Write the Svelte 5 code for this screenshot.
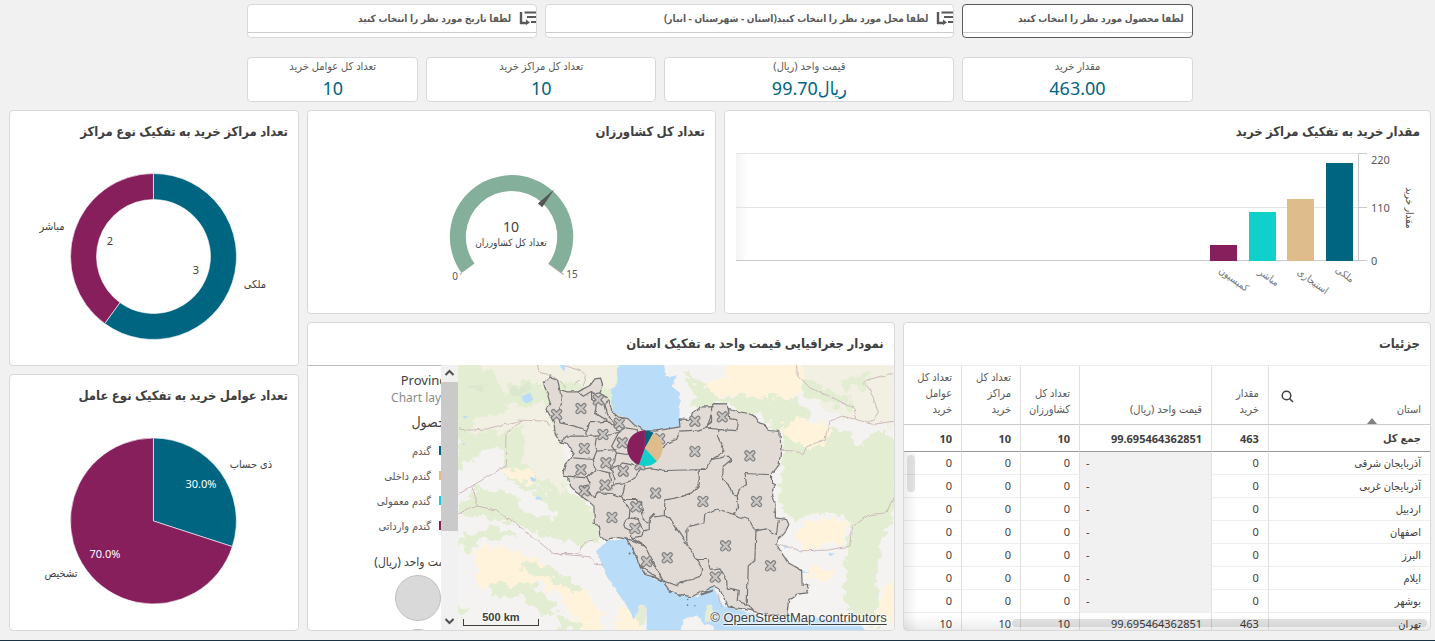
<script>
  const filters = [
    { label: 'لطفا تاریخ مورد نظر را انتخاب کنید', icon: true, active: false, span: 5 },
    { label: 'لطفا محل مورد نظر را انتخاب کنید(استان - شهرستان - انبار)', icon: true, active: false, span: 7 },
    { label: 'لطفا محصول مورد نظر را انتخاب کنید', icon: false, active: true, span: 4 }
  ];
  const kpis = [
    { label: 'تعداد کل عوامل خرید', value: '10', span: 3 },
    { label: 'تعداد کل مراکز خرید', value: '10', span: 4 },
    { label: 'قیمت واحد (ریال)', value: '99.70ریال', span: 5 },
    { label: 'مقدار خرید', value: '463.00', span: 4 }
  ];
  const bars = [
    { name: 'ملکی', x: 601, y: 10, color: '#006580', lx: 618, ly: 124 },
    { name: 'استیجاری', x: 562, y: 46, color: '#dfbc8c', lx: 586, ly: 131 },
    { name: 'مباشر', x: 524, y: 59, color: '#11cfca', lx: 542, ly: 127 },
    { name: 'کمیسیون', x: 485, y: 92, color: '#871f5c', lx: 507, ly: 129 }
  ];
  const legend = [
    { name: 'گندم', color: '#006580' },
    { name: 'گندم داخلی', color: '#dfbc8c' },
    { name: 'گندم معمولی', color: '#11cfca' },
    { name: 'گندم وارداتی', color: '#871f5c' }
  ];
  const rows = [
    ['آذربایجان شرقی', '0', '-', '0', '0', '0'],
    ['آذربایجان غربی', '0', '-', '0', '0', '0'],
    ['اردبیل', '0', '-', '0', '0', '0'],
    ['اصفهان', '0', '-', '0', '0', '0'],
    ['البرز', '0', '-', '0', '0', '0'],
    ['ایلام', '0', '-', '0', '0', '0'],
    ['بوشهر', '0', '-', '0', '0', '0'],
    ['تهران', '463', '99.695464362851', '10', '10', '10']
  ];
  const marks = [
    [320, 165], [393, 147], [445, 121], [508, 191], [459, 225], [517, 250], [403, 267], [393, 331], [468, 310],
    [520, 335], [465, 377], [403, 394], [486, 474], [558, 442], [555, 507], [617, 401], [652, 595], [590, 606],
    [629, 238], [570, 316], [735, 185], [817, 172], [735, 276], [900, 289], [759, 426], [920, 426], [827, 559],
    [962, 619], [796, 653]
  ];
</script>

<div class="page">
  <div class="top filters">
    {#each filters as f}
      <button type="button" class="card filter" class:active={f.active} style="grid-column-end: span {f.span}">
        <span class="filter-head">
          {#if f.icon}
            <svg class="drill" viewBox="0 0 17 14" aria-hidden="true">
              <path d="M2 1V12H8" fill="none" stroke="#595959" stroke-width="2.4" />
              <path d="M7 8.5V14L11 11.5Z" fill="#595959" />
              <path d="M5.500 1.500H17M8 6H17M12 11H17" stroke="#595959" stroke-width="2" />
            </svg>
          {/if}
          <span class="filter-label">{f.label}</span>
        </span>
      </button>
    {/each}
  </div>

  <div class="top kpis">
    {#each kpis as k}
      <section class="card kpi" style="grid-column-end: span {k.span}">
        <h2>{k.label}</h2>
        <p dir="ltr">{k.value}</p>
      </section>
    {/each}
  </div>

  <main>
    <section class="card donut">
      <h2>تعداد مراکز خرید به تفکیک نوع مراکز</h2>
      <svg class="plot" viewBox="0 0 288 212">
        <g stroke="#fff" stroke-opacity=".6" stroke-width="1">
          <path d="M143.500 20.500A83 83 0 1 1 94.700 170.600L110 149.600A57 57 0 1 0 143.500 46.500Z" fill="#006580" />
          <path d="M94.700 170.600A83 83 0 0 1 143.500 20.500V46.500A57 57 0 0 0 110 149.600Z" fill="#871f5c" />
        </g>
        <g class="lab">
          <text x="42" y="77">مباشر</text>
          <text x="245" y="135">ملکی</text>
          <text x="100" y="92">2</text>
          <text x="186" y="121">3</text>
        </g>
      </svg>
    </section>

    <section class="card pie">
      <h2>تعداد عوامل خرید به تفکیک نوع عامل</h2>
      <svg class="plot" viewBox="0 0 288 212">
        <g stroke="#fff" stroke-opacity=".6" stroke-width="1">
          <path d="M143.500 103.500V20.500A83 83 0 0 1 222.400 129.100Z" fill="#006580" />
          <path d="M143.500 103.500L222.400 129.100A83 83 0 1 1 143.500 20.500Z" fill="#871f5c" />
        </g>
        <g class="lab">
          <text x="241" y="50">ذی حساب</text>
          <text x="51" y="160">تشخیص</text>
          <text class="inv" x="191" y="70">30.0%</text>
          <text class="inv" x="95" y="141">70.0%</text>
        </g>
      </svg>
    </section>

    <section class="card gauge">
      <h2>تعداد کل کشاورزان</h2>
      <svg class="plot" viewBox="0 0 407 160">
        <path d="M153.600 120.100A61.700 61.700 0 1 1 253.400 120.100L240.500 110.600A45.700 45.700 0 1 0 166.500 110.600Z" fill="#84af9b" />
        <path d="M153.600 120.100L152 121.500M240.500 110.600L255.500 121.500" stroke="#aaa" stroke-width="1.2" />
        <path d="M246.300 36.300L234.200 54.200L229.800 50.600Z" fill="#555" />
        <g class="lab">
          <text class="big" x="203" y="79">10</text>
          <text class="sub" x="203" y="93">تعداد کل کشاورزان</text>
          <text class="tick" x="147" y="127">0</text>
          <text class="tick" x="264" y="125">15</text>
        </g>
      </svg>
    </section>

    <section class="card bar">
      <h2>مقدار خرید به تفکیک مراکز خرید</h2>
      <svg class="plot" viewBox="0 0 705 160">
        <defs>
          <linearGradient id="edge"><stop offset="0" stop-color="#f4f4f4" /><stop offset="1" stop-color="#fff" /></linearGradient>
        </defs>
        <rect x="11" y="1" width="12" height="107" fill="url(#edge)" />
        <path d="M11 .5H634M11 54.500H634" stroke="#e4e4e4" />
        <path d="M11 107.500H642M633.500 .5V107.500M634 .5H642M634 54.500H642" stroke="#c8c8c8" fill="none" />
        {#each bars as b}
          <rect x={b.x} y={b.y} width="27" height={108 - b.y} fill={b.color} />
          <text class="cat" text-anchor="middle" transform="translate({b.lx} {b.ly}) rotate(36)">{b.name}</text>
        {/each}
        <g class="axis">
          <text x="646" y="11">220</text>
          <text x="646" y="59">110</text>
          <text x="646" y="112">0</text>
        </g>
        <text class="ytitle" text-anchor="middle" transform="translate(681 55) rotate(90)">مقدار خرید</text>
      </svg>
    </section>

    <section class="card map">
      <h2>نمودار جغرافیایی قیمت واحد به تفکیک استان</h2>
      <div class="map-body">
        <div class="legend">
          <div class="legend-in">
            <p class="l-title" dir="ltr">Province</p>
            <p class="l-sub" dir="ltr">Chart layer</p>
            <p class="l-dim">محصول</p>
            <ul>
              {#each legend as l}
                <li><i style="background: {l.color}"></i><span>{l.name}</span></li>
              {/each}
            </ul>
            <p class="l-size">قیمت واحد (ریال)</p>
            <span class="bubble"></span>
            <span class="bubble"></span>
          </div>
        </div>
        <div class="scroll">
          <svg viewBox="0 0 17 17"><path d="M4.500 10L8.500 6L12.500 10" /></svg>
          <span class="thumb"></span>
          <svg class="down" viewBox="0 0 17 17"><path d="M4.500 6L8.500 10L12.500 6" /></svg>
        </div>
        <div class="canvas">
          <svg viewBox="24 15 1308 798" preserveAspectRatio="xMidYMid slice">
            <defs>
              <filter id="rough" x="-5%" y="-5%" width="110%" height="110%">
                <feTurbulence type="fractalNoise" baseFrequency=".035" numOctaves="4" seed="4" />
                <feDisplacementMap in="SourceGraphic" scale="50" xChannelSelector="R" yChannelSelector="G" />
              </filter>
              <filter id="jag" x="-5%" y="-5%" width="110%" height="110%">
                <feTurbulence type="fractalNoise" baseFrequency=".05" numOctaves="2" seed="9" />
                <feDisplacementMap in="SourceGraphic" scale="11" xChannelSelector="R" yChannelSelector="G" />
              </filter>
            </defs>
            <rect x="24" y="15" width="1308" height="798" fill="#f5f3f2" />
            <g filter="url(#rough)">
              <path fill="#e3edd1" d="M0 0H520V160L330 250L345 300L350 400L430 440L440 545L390 560L330 540L300 515L215 490L200 440L240 470L320 480L330 430L270 380L230 350L160 330L130 260L100 290L20 250Z" />
              <path fill="#f1f0e2" d="M90 0H500V100L300 60L270 110L330 250L290 280L220 200L100 250L60 180L180 150L150 80Z" />
              <path fill="#f1f0e2" d="M220 200L330 215L350 300L340 410L290 370L230 330L215 260Z" />
              <path fill="#e3edd1" d="M24 230L110 215L160 240L120 300L60 330L24 330ZM170 330L220 350L290 400L340 420L330 470L250 430L190 400L150 370Z" />
              <path fill="#f5f3f2" d="M60 300L140 260L160 320L100 350L24 390V330ZM60 350L150 330L170 360L250 400L330 470L290 490L200 470L190 420L130 410Z" />
              <path fill="#e3edd1" d="M40 430L85 380L200 410L215 460L320 480L340 520L300 530L180 490L80 470L24 455V430ZM30 530L130 500L200 520L150 545L90 535L60 580L24 560Z" />
              <path fill="#e3edd1" d="M180 80L260 60L300 100L230 150L160 120ZM60 90L110 100L100 130L40 150Z" />
              <path fill="#dbe7ce" d="M190 85L235 80L225 115L175 110ZM60 70L100 75L90 95L50 90Z" />
              <path fill="#fff3dc" d="M60 575L130 560L210 575L270 600L320 640L400 690L450 745L460 813H400L340 720L270 670L200 690L120 680L65 675L90 620Z" />
              <path fill="#e3edd1" d="M120 680L230 670L280 700L330 760L290 770L210 710L130 710ZM230 600L300 620L400 690L380 700L290 650L220 630ZM24 740L60 745L50 770L24 765ZM330 770L400 790L390 813H320ZM470 620L500 640L520 700L490 680Z" />
              <path fill="#fff3dc" d="M160 325L215 330L255 350L250 375L200 360L165 345Z" />
              <path fill="#fff3dc" d="M505 740L560 745L580 820H500Z" />
              <path fill="#e3edd1" d="M700 30L740 110L720 150L830 130L880 160L930 165L960 200L1000 210L1000 280L985 430L1030 480L1110 460L1190 470L1210 520L1190 560L1180 720L1240 800L1290 800L1280 640L1300 540L1340 450V260L1290 200L1230 260L1190 210L1090 200L1050 120L930 105L820 115L790 90L760 80Z" />
              <path fill="#f1f0e2" d="M1030 0H1340V210L1260 190L1190 180L1060 110L1060 60Z" />
              <path fill="#e3edd1" d="M1050 60L1110 80L1200 110L1210 150L1120 130L1060 110ZM1180 60L1260 40L1250 80L1190 90Z" />
              <path fill="#fff3dc" d="M820 0H1060V70L1040 115L860 110L790 100L760 75L840 55ZM1000 195L1060 175L1140 200L1135 260L1080 270L1000 220ZM1040 500L1120 475L1200 490L1190 550L1050 570ZM1080 625L1150 630L1140 660L1090 665Z" />
              <path fill="#fff3dc" d="M1300 680L1340 660V800L1290 770Z" />
            </g>
            <g fill="#b9dcf8" filter="url(#jag)">
              <path d="M515 10H640L650 50L680 50L665 80L690 100L688 205L620 215L570 210L540 180L490 160L483 90L505 70L500 30Z" />
              <path d="M438 575L455 560L470 545L530 538L550 575L570 620L585 645L630 665L680 700L740 712L790 682L820 740L880 755L950 775L1100 775L1230 790L1250 820H800L785 795L765 800L740 765L700 780L690 820H590L590 750L570 735L555 780L530 740L470 650Z" />
              <path d="M215 110L240 98L250 120L232 133L218 122ZM325 12H350L342 35ZM240 345L258 360L255 372L242 360ZM262 405L278 420H255ZM1058 633L1080 640H1056ZM1135 580L1160 583L1140 590ZM1000 560L1018 562L1005 567ZM40 170H54L48 178ZM35 250L48 255L40 258Z" />
            </g>
            <path filter="url(#jag)" fill="#e3edd1" stroke="#e8e8dc" stroke-width="3" d="M565 745L580 735L588 750L582 795L570 800L560 775ZM770 740L785 735L790 780L765 790Z" />
            <g filter="url(#jag)" fill="none" stroke="#cdb9bb" stroke-width="3">
              <path d="M24 205L60 212L110 208L150 198L215 182L290 185L300 200M212 185L168 225L166 320L65 380L24 405M65 380L80 425L82 440L24 462M82 440L140 452L195 490L310 582L420 592L435 615L460 616M310 582H385L405 545L440 542" />
              <path d="M262 15L268 38L310 50L350 85M350 20L395 35L410 50L400 80M390 60L370 75" />
              <path d="M1040 15L1042 45L1080 85L1160 120L1215 148L1214 175M1175 170L1215 178L1270 195L1330 185M1175 170L1140 185L1125 240L1070 262L1060 285L1035 275L993 272M1240 75L1250 62L1330 40M1250 75L1270 110L1285 160L1260 190M977 550L1050 574L1130 572L1200 560L1205 500L1260 465L1310 460L1332 410M805 700L812 742" />
            </g>
            <g filter="url(#jag)" stroke="#737373" stroke-width="3.6" stroke-linejoin="round">
              <path fill="#e1dad5" d="M280 72L300 52L322 62L330 90L352 97L385 97L400 88L420 78L435 58L452 56L458 75L447 100L462 108L478 124L485 155L505 172L535 178L555 198L590 213L615 215L690 202L688 178L722 180L727 160L750 142L785 142L795 132L828 133L835 150L860 155L895 162L915 170L928 190L945 195L955 213L990 216L993 270L988 315L965 345L965 370L977 375L965 390L975 430L977 475L1010 480L1017 495L1005 520L977 550L995 580L1015 610L1055 632L1057 677L1077 677L1070 700L1040 705L1017 720L1010 768L940 765L900 752L835 742L820 712L810 690L795 682L760 695L725 712L690 705L660 695L640 668L610 652L585 645L570 618L550 572L530 538L485 532L470 545L450 530L445 497L433 495L432 440L415 425L380 400L362 380L355 352L338 350L345 315L362 295L370 280L352 252L332 248L315 220L312 190L290 150L300 130L290 95Z" />
              <g fill="none">
                <path d="M330 92L335 130L325 160L330 190L375 200L410 212L412 225M332 248L350 230L440 230L435 260L440 275M410 212L420 190L475 185L508 215L490 225L440 230" />
                <path d="M385 97L400 110L425 95L425 120L440 130L435 160L475 185M447 100L430 105L425 95M462 135L470 165L490 185L500 210M478 124L462 135L440 130" />
                <path d="M508 215L525 205L560 210L570 235M508 215L485 260L500 280L495 300L480 330M500 280L530 285L560 270M440 275L430 300L370 295M440 275L500 270M430 300L435 330L410 355L355 350M435 330L480 340L485 365" />
                <path d="M410 355L420 375L400 380L435 415M485 330L495 360L485 390M480 330L520 310L560 320M485 375L520 370L540 365L555 355L570 330L605 325L645 333L765 330L785 300L818 280L820 265L805 235L807 210L770 205L740 212L690 215L680 240L650 250L640 265L605 290" />
                <path d="M435 415L440 400L485 402L512 412L520 400L525 375M512 412L520 420L560 420L575 430L580 480L598 490M520 420L540 450L538 475L520 490L525 505L545 515L545 535L575 530L580 515L590 512M538 475L565 480L580 515" />
                <path d="M765 333H748V375L725 400L690 412L645 422L643 468L615 472L612 465L598 480L598 510L580 515M643 468L660 475L675 500L695 530L712 555L740 600L755 625L752 650L725 660L690 668L680 678L640 665L600 590L585 560L545 535" />
                <path d="M770 205L785 165M862 213L865 190L860 180L840 178L835 150M807 210L862 213M785 142L785 185L772 195M785 300L835 290L845 300L820 320L818 360L835 375L845 400L862 410L865 440L852 465L800 447L765 465L762 490L712 502L710 530L712 555" />
                <path d="M862 410L868 390L890 375L885 342L950 345L965 345M852 465L895 480L918 515L915 600L895 620L892 730L910 755M918 515L945 508L980 525L985 482M740 600L775 600L780 630L810 625L830 660L832 685L865 692L862 725L892 735" />
                <path d="M530 538L555 545L585 560M570 618L600 640L640 668M690 668L705 672" />
              </g>
            </g>
            <g fill="#777">
              <circle cx="539" cy="582" r="3" /><circle cx="660" cy="697" r="4" /><circle cx="690" cy="708" r="4" />
              <circle cx="713" cy="720" r="2.500" /><circle cx="713" cy="737" r="2.500" /><circle cx="735" cy="739" r="2" />
              <path d="M750 703L790 690L788 697L755 708Z" />
            </g>
            {#each marks as [x, y]}
              <g transform="translate({x} {y})" stroke-linecap="round" stroke-linejoin="round">
                <path d="M-10 -10L10 10M-10 10L10 -10" stroke="#808080" stroke-width="14" />
                <path d="M-10 -10L10 10M-10 10L10 -10" stroke="#c8c5c3" stroke-width="7" />
              </g>
            {/each}
            <g transform="translate(585 266)">
              <path d="M0 0V-53A53 53 0 0 1 26 -46Z" fill="#006580" />
              <path d="M0 0L26 -46A53 53 0 0 1 36 39Z" fill="#dfbc8c" />
              <path d="M0 0L36 39A53 53 0 0 1 -18 50Z" fill="#11cfca" />
              <path d="M0 0L-18 50A53 53 0 0 1 0 -53Z" fill="#871f5c" />
            </g>
          </svg>
          <div class="scale">500 km</div>
          <div class="credit" dir="ltr">© <a href="#osm">OpenStreetMap contributors</a></div>
        </div>
      </div>
    </section>

    <section class="card details">
      <h2>جزئیات</h2>
      <div class="table-wrap">
        <table dir="rtl">
          <colgroup>
            <col class="c-name" /><col class="c-qty" /><col class="c-price" /><col class="c-n" /><col class="c-n" /><col class="c-last" />
          </colgroup>
          <thead>
            <tr>
              <th scope="col" class="sorted">
                استان
                <button type="button" aria-label="جستجو">
                  <svg viewBox="0 0 13 13"><circle cx="5.500" cy="5.500" r="4.300" /><path d="M8.700 8.700L12 12" /></svg>
                </button>
              </th>
              <th scope="col">مقدار خرید</th>
              <th scope="col">قیمت واحد (ریال)</th>
              <th scope="col">تعداد کل کشاورزان</th>
              <th scope="col">تعداد کل مراکز خرید</th>
              <th scope="col">تعداد کل عوامل خرید</th>
            </tr>
            <tr class="total">
              <th scope="row">جمع کل</th><td>463</td><td>99.695464362851</td><td>10</td><td>10</td><td>10</td>
            </tr>
          </thead>
          <tbody>
            {#each rows as r}
              <tr>
                {#each r as c}
                  <td class:null={c === '-'}>{c}</td>
                {/each}
              </tr>
            {/each}
          </tbody>
        </table>
        <span class="fade-x"></span>
        <span class="fade-y"></span>
        <span class="bar-y"></span>
        <span class="bar-x"></span>
      </div>
    </section>
  </main>
</div>

<style>
  :global(body) { background: #f1f1f1; }
  .page {
    box-sizing: border-box;
    min-height: 100vh;
    padding: 4px 4px 9px 9px;
    border-bottom: 1px solid #1c3344;
    color: #404040;
    font-family: 'Noto Sans', 'DejaVu Sans Condensed', 'DejaVu Sans', sans-serif;
    font-size: 12px;
  }
  h2, p, ul { margin: 0; padding: 0; }
  .top, main { display: grid; grid-template-columns: repeat(24, minmax(0, 1fr)); gap: 8px; }
  .top > :first-child { grid-column-start: 5; }
  .card { box-sizing: border-box; border: 1px solid #d9d9d9; border-radius: 4px; background: #fff; overflow: hidden; min-width: 0; }
  .filters { margin-bottom: 19px; }
  .filter { display: flex; flex-direction: column; height: 34px; padding: 0; color: #595959; font: inherit; cursor: pointer; }
  .filter.active { border-color: #595959; }
  .filter-head { display: flex; direction: rtl; align-items: center; gap: 8px; width: 100%; height: 28px; padding-bottom: 2px; border-bottom: 1px solid #ccc; box-sizing: border-box; }
  .filter-label { font-size: 10px; font-weight: 700; white-space: nowrap; }
  .active .filter-label { padding-right: 8px; }
  .drill { width: 17px; height: 14px; flex: none; }
  .kpis { margin-bottom: 8px; }
  .kpi { height: 45px; text-align: center; }
  .kpi h2 { direction: rtl; font-size: 11px; line-height: 16px; font-weight: 400; color: #595959; }
  .kpi p { font-size: 18px; line-height: 28px; color: #006580; }
  main { grid-template-rows: 204px 44px 257px; }
  main h2 { direction: rtl; box-sizing: border-box; height: 42px; padding: 0 10px; font-size: 13px; line-height: 40px; font-weight: 700; white-space: nowrap; }
  .donut { grid-area: 1 / 1 / 3 / 6; }
  .pie { grid-area: 3 / 1 / 4 / 6; }
  .gauge { grid-area: 1 / 6 / 2 / 13; }
  .bar { grid-area: 1 / 13 / 2 / 25; }
  .map { grid-area: 2 / 6 / 4 / 16; display: flex; flex-direction: column; }
  .details { grid-area: 2 / 16 / 4 / 25; display: flex; flex-direction: column; }
  .plot { display: block; width: 100%; height: calc(100% - 42px); }
  .lab text { text-anchor: middle; font-size: 11px; fill: #404040; }
  .lab .inv { fill: #fff; }
  .lab .big { font-size: 14px; }
  .lab .sub { font-size: 10px; }
  .lab .tick { font-size: 10px; fill: #595959; }
  .axis text { font-size: 11px; fill: #595959; }
  .cat { font-size: 10px; fill: #737373; }
  .ytitle { font-size: 10px; fill: #404040; }

  .map-body { display: flex; flex: 1; min-height: 0; }
  .legend { flex: none; width: 133px; overflow: hidden; border-top: 1px solid #bbb; }
  .legend-in { display: flex; flex-direction: column; align-items: flex-end; margin-right: -12px; padding-top: 4px; direction: ltr; white-space: nowrap; }
  .legend p { direction: rtl; line-height: 20px; }
  .legend .l-title { direction: ltr; font-size: 13px; }
  .legend .l-sub { direction: ltr; line-height: 16px; font-size: 12px; color: #8c8c8c; }
  .legend .l-dim { padding-top: 6px; font-size: 14px; }
  .legend ul { direction: rtl; align-self: stretch; padding-top: 6px; list-style: none; }
  .legend li { display: flex; align-items: center; gap: 8px; height: 25px; color: #595959; font-size: 11px; }
  .legend i { flex: none; width: 14px; height: 9px; }
  .l-size { padding: 14px 0 3px; }
  .bubble { box-sizing: border-box; flex: none; width: 46px; height: 46px; margin: 0 12px 8px 0; border: 1px solid #bfbfbf; border-radius: 50%; background: #d9d9d9; }
  .scroll { display: flex; flex-direction: column; flex: none; width: 17px; background: #f1f1f1; }
  .scroll svg { width: 17px; height: 17px; fill: none; stroke: #505050; stroke-width: 2; }
  .thumb { height: 149px; background: #cacaca; }
  .down { margin-top: auto; }
  .canvas { position: relative; flex: 1; min-width: 0; overflow: hidden; }
  .canvas > svg { display: block; width: 100%; height: 100%; }
  .scale { position: absolute; left: 5px; bottom: 4px; width: 76px; padding-bottom: 2px; font: 700 11px/13px 'Liberation Sans', sans-serif; text-align: center; text-shadow: 0 0 2px #fff, 0 0 2px #fff; }
  .scale::after { content: ''; position: absolute; left: 0; right: 0; bottom: 0; height: 6px; border: solid #404040; border-width: 0 1px 1px; }
  .credit { position: absolute; right: 7px; bottom: 3px; font: 13px/18px 'Liberation Sans', sans-serif; text-shadow: 0 0 2px #fff, 0 0 2px #fff, 0 0 3px #fff; white-space: nowrap; }
  .credit a { color: inherit; text-underline-offset: 2px; }

  .table-wrap { position: relative; flex: 1; min-height: 0; overflow: hidden; border-top: 1px solid #eee; }
  table { width: 100%; table-layout: fixed; border-collapse: separate; border-spacing: 0; }
  .c-name { width: 30.8%; }
  .c-qty { width: 10.8%; }
  .c-price { width: 25.1%; }
  .c-n { width: 11.2%; }
  .c-last { width: 10.9%; }
  th, td { box-sizing: border-box; padding: 0 9px; border-left: 1px solid #e0e0e0; text-align: right; font-size: 11px; }
  tr > :last-child { border-left: 0; }
  thead th { height: 59px; padding-bottom: 7px; border-bottom: 1px solid #ccc; vertical-align: bottom; font-weight: 400; line-height: 16px; color: #595959; }
  .sorted { position: relative; }
  .sorted button { position: absolute; left: 12px; top: 24px; width: 13px; height: 13px; padding: 0; border: 0; background: none; }
  .sorted button svg { display: block; width: 13px; height: 13px; fill: none; stroke: #404040; stroke-width: 1.5; }
  .sorted::after { content: ''; position: absolute; right: 53px; bottom: 0; border: 5px solid transparent; border-top: 0; border-bottom: 6px solid #808080; }
  .total th, .total td { height: 27px; padding-bottom: 0; border-bottom: 1px solid #999; vertical-align: middle; font-weight: 700; color: #404040; }
  tbody td { height: 23px; border-bottom: 1px solid #eee; line-height: 16px; }
  tbody .null { padding-left: 6px; text-align: left; background: #f1f1f1; border-bottom-color: #f1f1f1; }
  .table-wrap > span { position: absolute; }
  .fade-x { left: 0; top: 86px; bottom: 0; width: 14px; background: linear-gradient(90deg, #00000012, #0000); }
  .fade-y { left: 0; right: 0; bottom: 0; height: 14px; background: linear-gradient(0deg, #00000014, #0000); }
  .bar-y { left: 3px; top: 89px; width: 8px; height: 37px; border-radius: 4px; background: #0000001a; }
  .bar-x { left: 108px; right: 3px; bottom: 3px; height: 8px; border-radius: 4px; background: #0000001a; }
</style>
